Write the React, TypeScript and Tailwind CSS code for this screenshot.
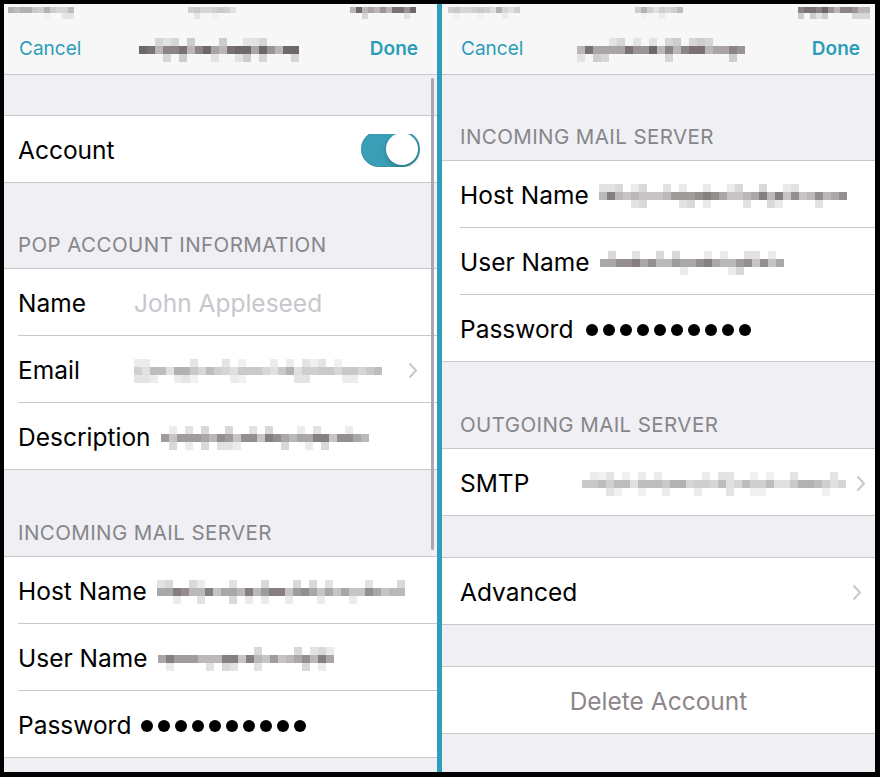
import { FC, ReactNode } from 'react'

const SEP = 'border-[#c8c7cc]'

// deterministic pseudo random, so the pixelated "blurred" values look the same each render
function rng(seed: number) {
  let x = seed
  return () => {
    x = (x * 9301 + 49297) % 233280
    return x / 233280
  }
}

const PALETTES = {
  light: {
    core: ['#c9c9c9', '#d6d6d6', '#bdbdbd', '#e0e0e0', '#b3b1b1', '#d0cfcf'],
    edge: ['#ececec', '#e4e4e4', '#f1f1f1'],
  },
  mid: {
    core: ['#aaa7a7', '#bab8b8', '#948e8e', '#c6c4c4', '#a09c9c', '#857f7f'],
    edge: ['#e2e2e2', '#d9d9d9', '#ebebeb'],
  },
  dark: {
    core: ['#8c8484', '#9b9494', '#7a7272', '#aaa4a4', '#6f6868', '#bab6b6'],
    edge: ['#d6d6d6', '#cdcdcd', '#e3e3e3'],
  },
}

interface MosaicProps {
  w: number
  seed: number
  tone: keyof typeof PALETTES
  small?: boolean
}

const Mosaic: FC<MosaicProps> = ({ w, seed, tone, small }) => {
  const r = rng(seed)
  const cell = small ? 6 : 8
  const cols = Math.round(w / cell)
  const p = PALETTES[tone]
  const pick = (a: string[]) => a[Math.floor(r() * a.length)]
  const rows = small ? [1, 2] : [0, 1, 2]
  return (
    <div className="flex shrink-0 flex-col blur-[0.4px]">
      {rows.map((row) => (
        <div key={row} className="flex">
          {Array.from({ length: cols }).map((_, i) => {
            const filled = row === 1 || r() < 0.35
            return (
              <div
                key={i}
                className={small ? 'h-[6px] w-[6px]' : 'h-[8px] w-[8px]'}
                style={{ background: filled ? pick(row === 1 ? p.core : p.edge) : 'transparent' }}
              />
            )
          })}
        </div>
      ))}
    </div>
  )
}

const Chevron: FC = () => (
  <svg width="10" height="17" viewBox="0 0 10 17" className="shrink-0">
    <path d="M1.5 1.5 L8 8.5 L1.5 15.5" stroke="#c7c7cc" strokeWidth="2" fill="none" />
  </svg>
)

const Toggle: FC = () => (
  <div className="relative h-[36px] w-[59px] shrink-0 rounded-full bg-[#3a9fb6] shadow-[inset_0_0_0_1px_rgba(0,0,0,0.08)]">
    <div className="absolute right-[2px] top-[2px] h-[32px] w-[32px] rounded-full bg-white shadow-[0_2px_4px_rgba(0,0,0,0.25)]" />
  </div>
)

const Dots: FC = () => (
  <div className="flex gap-[5px]">
    {Array.from({ length: 10 }).map((_, i) => (
      <span key={i} className="h-[12px] w-[12px] rounded-full bg-black" />
    ))}
  </div>
)

interface RowProps {
  label?: string
  children?: ReactNode
  last?: boolean
  chevron?: boolean
  labelClass?: string
  padLeft: string
  padRight: string
}

const Row: FC<RowProps> = ({ label, children, last, chevron, labelClass, padLeft, padRight }) => (
  <div className={`flex h-[67px] bg-white ${padLeft} ${last ? `border-b ${SEP}` : ''}`}>
    <div className={`flex h-full flex-1 items-center gap-[10px] pt-[3px] ${padRight} ${last ? '' : `border-b ${SEP}`}`}>
      {label && <span className={`shrink-0 text-[24.5px] text-black ${labelClass ?? ''}`}>{label}</span>}
      <div className="flex min-w-0 flex-1 items-center overflow-hidden">{children}</div>
      {chevron && <Chevron />}
    </div>
  </div>
)

const Header: FC<{ children: ReactNode; h: string; padLeft: string }> = ({ children, h, padLeft }) => (
  <div className={`flex ${h} items-end pb-[7px] ${padLeft} text-[20.5px] uppercase tracking-[0.02em] text-[#86868b]`}>
    {children}
  </div>
)

interface NavProps {
  seed: number
  pad: string
  statusPad: string
  status: [number, number, number]
}

const NavBar: FC<NavProps> = ({ seed, pad, statusPad, status }) => (
  <div className={`bg-[#f7f7f8] border-b ${SEP}`}>
    <div className={`flex h-[18px] items-center justify-between ${statusPad}`}>
      <Mosaic w={status[0]} seed={seed + 3} tone="light" small />
      <Mosaic w={status[1]} seed={seed + 5} tone="light" small />
      <Mosaic w={status[2]} seed={seed + 7} tone="dark" small />
    </div>
    <div className={`grid h-[52px] grid-cols-[1fr_auto_1fr] items-center pt-[3px] text-[19px] text-[#2b9db9] ${pad}`}>
      <span>Cancel</span>
      <Mosaic w={seed === 11 ? 158 : 168} seed={seed} tone="dark" />
      <span className="justify-self-end font-semibold">Done</span>
    </div>
  </div>
)

export default function App() {
  return (
    <div className="flex h-[777px] w-[880px] bg-black pb-[5px] pl-[4px] pr-[5px] pt-[4px] font-['Inter','Noto_Sans',sans-serif]">
      {/* left phone */}
      <div className="relative flex w-[433px] flex-col overflow-hidden bg-[#efeff4]">
        <NavBar seed={11} pad="px-[15px] pr-[19px]" statusPad="pl-[4px] pr-[21px]" status={[66, 48, 66]} />
        <div className="h-[40px] shrink-0" />
        <div className={`border-t ${SEP}`}>
          <Row label="Account" last padLeft="pl-[14px]" padRight="pr-[17px]">
            <div className="flex-1" />
            <div className="-mt-[3px]">
              <Toggle />
            </div>
          </Row>
        </div>
        <Header h="h-[85px]" padLeft="pl-[14px]">POP Account Information</Header>
        <div className={`border-t ${SEP}`}>
          <Row label="Name" labelClass="min-w-[106px]" padLeft="pl-[14px]" padRight="pr-[19px]">
            <span className="text-[24.5px] text-[#c7c7cd]">John Appleseed</span>
          </Row>
          <Row label="Email" labelClass="min-w-[106px]" chevron padLeft="pl-[14px]" padRight="pr-[19px]">
            <Mosaic w={248} seed={21} tone="light" />
          </Row>
          <Row label="Description" last padLeft="pl-[14px]" padRight="pr-[19px]">
            <Mosaic w={204} seed={33} tone="mid" />
          </Row>
        </div>
        <Header h="h-[86px]" padLeft="pl-[14px]">Incoming Mail Server</Header>
        <div className={`border-t ${SEP}`}>
          <Row label="Host Name" padLeft="pl-[14px]" padRight="pr-[19px]">
            <Mosaic w={244} seed={45} tone="mid" />
          </Row>
          <Row label="User Name" padLeft="pl-[14px]" padRight="pr-[19px]">
            <Mosaic w={176} seed={57} tone="mid" />
          </Row>
          <Row label="Password" last padLeft="pl-[14px]" padRight="pr-[19px]">
            <Dots />
          </Row>
        </div>
        <div className="absolute right-[3px] top-[74px] h-[472px] w-[3px] rounded-full bg-[#a9a9ad]" />
      </div>

      {/* divider */}
      <div className="w-[5px] shrink-0 bg-[#2b9fbc]" />

      {/* right phone */}
      <div className="flex w-[433px] flex-col overflow-hidden bg-[#efeff4]">
        <NavBar seed={13} pad="pl-[19px] pr-[15px]" statusPad="pl-[6px] pr-[5px]" status={[72, 48, 74]} />
        <Header h="h-[85px]" padLeft="pl-[18px]">Incoming Mail Server</Header>
        <div className={`border-t ${SEP}`}>
          <Row label="Host Name" padLeft="pl-[18px]" padRight="pr-[13px]">
            <Mosaic w={245} seed={71} tone="mid" />
          </Row>
          <Row label="User Name" padLeft="pl-[18px]" padRight="pr-[13px]">
            <Mosaic w={180} seed={83} tone="mid" />
          </Row>
          <Row label="Password" last padLeft="pl-[18px]" padRight="pr-[13px]">
            <div className="pl-[3px]">
              <Dots />
            </div>
          </Row>
        </div>
        <Header h="h-[86px]" padLeft="pl-[18px]">Outgoing Mail Server</Header>
        <div className={`border-t ${SEP}`}>
          <Row label="SMTP" labelClass="min-w-[112px]" chevron last padLeft="pl-[18px]" padRight="pr-[13px]">
            <Mosaic w={260} seed={95} tone="light" />
          </Row>
        </div>
        <div className="h-[41px] shrink-0" />
        <div className={`border-t ${SEP}`}>
          <Row label="Advanced" chevron last padLeft="pl-[18px]" padRight="pr-[13px]" />
        </div>
        <div className="h-[41px] shrink-0" />
        <div className={`flex h-[68px] items-center justify-center border-y bg-white pt-[2px] text-[24.5px] text-[#8d8589] ${SEP}`}>
          Delete Account
        </div>
      </div>
    </div>
  )
}
